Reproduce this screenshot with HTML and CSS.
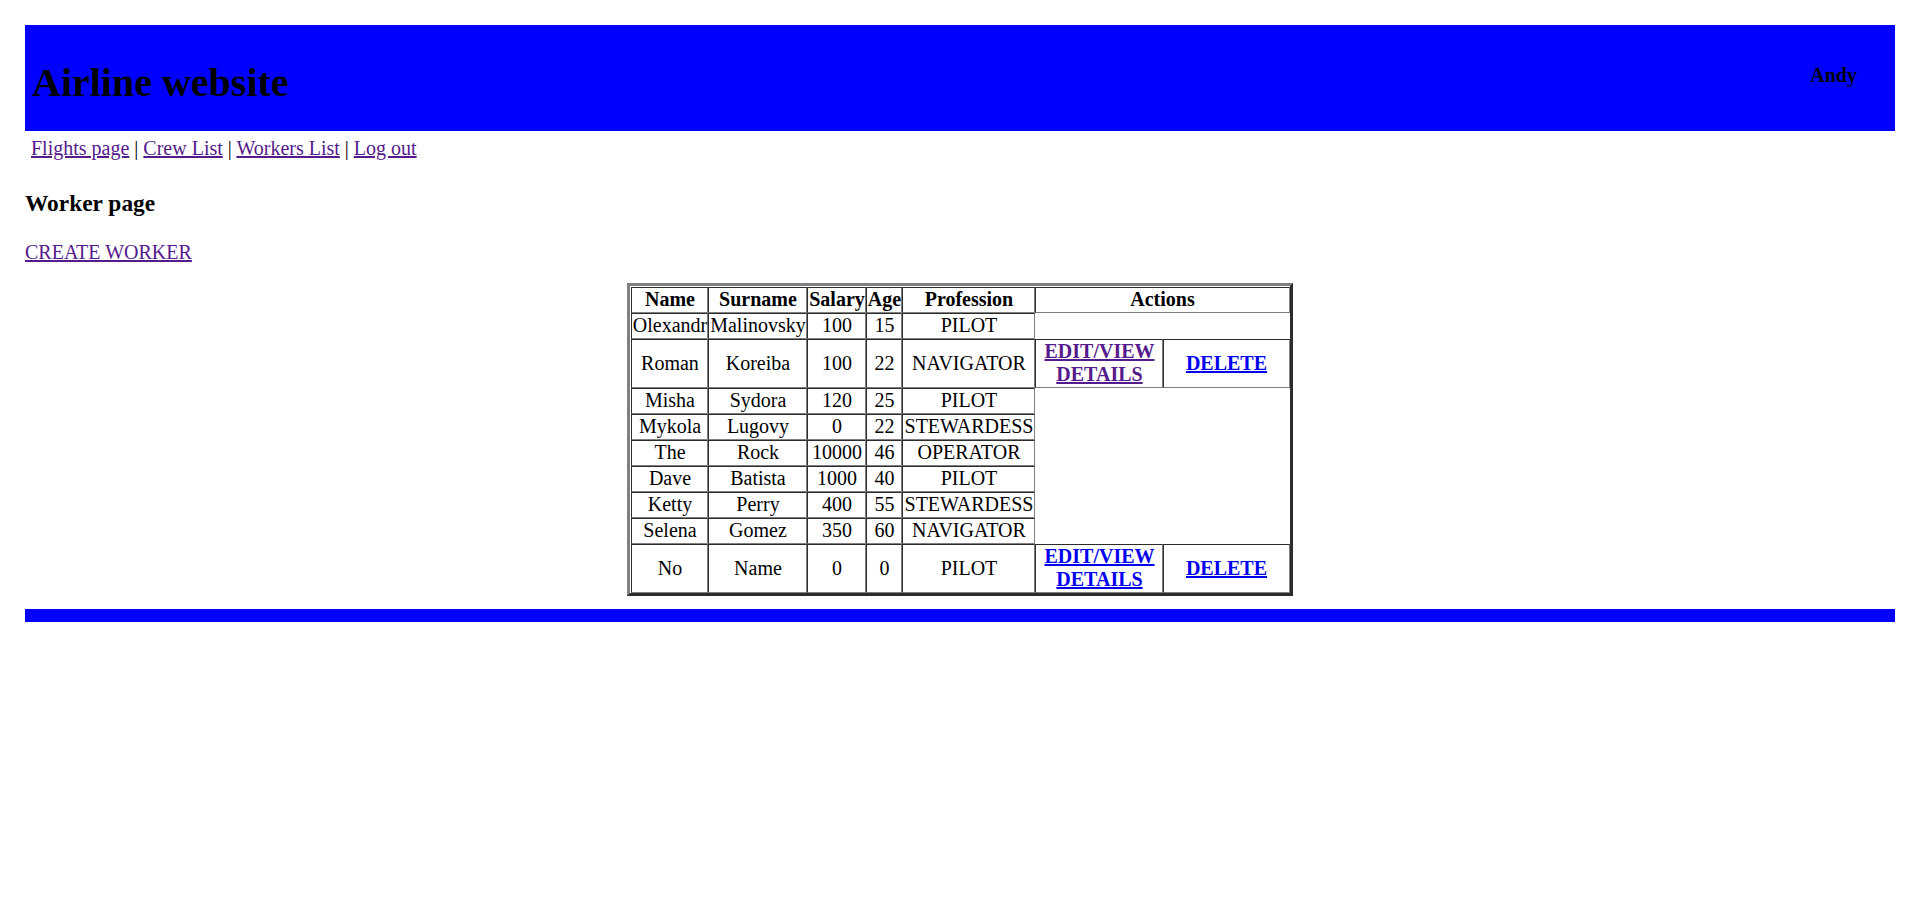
FILE: index.html
```html
<!DOCTYPE html>
<html lang="en">
<head>
<meta charset="utf-8">
<title>Airline website</title>
<link rel="stylesheet" href="styles.css">
</head>
<body>
<header class="site-header">
  <h1 class="site-title">Airline website</h1>
  <h4 class="user-name">Andy</h4>
</header>
<nav class="main-nav"><a href="#flights" class="visited">Flights page</a> | <a href="#crew" class="visited">Crew List</a> | <a href="#workers" class="visited">Workers List</a> | <a href="#logout" class="visited">Log out</a></nav>
<h3 class="page-title">Worker page</h3>
<p class="create"><a href="#create" class="visited">CREATE WORKER</a></p>
<table class="workers">
  <colgroup>
    <col class="c-name"><col class="c-surname"><col class="c-salary"><col class="c-age"><col class="c-prof"><col class="c-edit"><col class="c-del">
  </colgroup>
  <tr><th>Name</th><th>Surname</th><th>Salary</th><th>Age</th><th>Profession</th><th colspan="2">Actions</th></tr>
  <tr><td>Olexandr</td><td>Malinovsky</td><td>100</td><td>15</td><td>PILOT</td></tr>
  <tr><td>Roman</td><td>Koreiba</td><td>100</td><td>22</td><td>NAVIGATOR</td><td><a href="#e2" class="act visited">EDIT/VIEW DETAILS</a></td><td><a href="#d2" class="act">DELETE</a></td></tr>
  <tr><td>Misha</td><td>Sydora</td><td>120</td><td>25</td><td>PILOT</td></tr>
  <tr><td>Mykola</td><td>Lugovy</td><td>0</td><td>22</td><td>STEWARDESS</td></tr>
  <tr><td>The</td><td>Rock</td><td>10000</td><td>46</td><td>OPERATOR</td></tr>
  <tr><td>Dave</td><td>Batista</td><td>1000</td><td>40</td><td>PILOT</td></tr>
  <tr><td>Ketty</td><td>Perry</td><td>400</td><td>55</td><td>STEWARDESS</td></tr>
  <tr><td>Selena</td><td>Gomez</td><td>350</td><td>60</td><td>NAVIGATOR</td></tr>
  <tr><td>No</td><td>Name</td><td>0</td><td>0</td><td>PILOT</td><td><a href="#e9" class="act">EDIT/VIEW DETAILS</a></td><td><a href="#d9" class="act">DELETE</a></td></tr>
</table>
<footer class="site-footer"></footer>
</body>
</html>
```
FILE: styles.css
```css
html, body {
  background: #ffffff;
}
body {
  margin: 25px;
  font-family: "Liberation Serif", "Times New Roman", serif;
  font-size: 20px;
  line-height: 23px;
  color: #000000;
}
a {
  color: #0000ee;
  text-decoration: underline;
}
a.visited {
  color: #551a8b;
}
.site-header {
  background: #0000ff;
  height: 106px;
  display: flex;
  justify-content: space-between;
  align-items: flex-start;
  padding: 0 38px 0 7px;
  box-sizing: border-box;
}
.site-title {
  margin: 35px 0 0 0;
  font-size: 40px;
  line-height: 46px;
  font-weight: bold;
}
.user-name {
  margin: 39px 0 0 0;
  font-size: 20px;
  line-height: 23px;
  font-weight: bold;
}
.main-nav {
  margin-top: 6px;
  padding-left: 6px;
  line-height: 23px;
}
.page-title {
  margin: 30px 0 0 0;
  font-size: 23.4px;
  line-height: 27px;
  font-weight: bold;
}
.create {
  margin: 24px 0 0 0;
  line-height: 23px;
}
.workers {
  margin: 19px auto 0 auto;
  border: 3px outset gray;
  padding: 1px 0 0 1px;
  border-spacing: 0;
  table-layout: fixed;
  width: 665px;
  box-sizing: border-box;
}
.c-name { width: 77px; }
.c-surname { width: 99px; }
.c-salary { width: 59px; }
.c-age { width: 36px; }
.c-prof { width: 133px; }
.c-edit { width: 128px; }
.c-del { width: 126px; }
.workers th,
.workers td {
  border: 1px inset gray;
  padding: 0 0 1px 0;
  line-height: 23px;
  text-align: center;
  vertical-align: middle;
  white-space: nowrap;
  overflow: visible;
}
.workers th {
  font-weight: bold;
}
.workers td:nth-child(6),
.workers td:nth-child(7) {
  white-space: normal;
}
.act {
  font-weight: bold;
}
.site-footer {
  margin-top: 13px;
  height: 13px;
  background: #0000ff;
}
```
